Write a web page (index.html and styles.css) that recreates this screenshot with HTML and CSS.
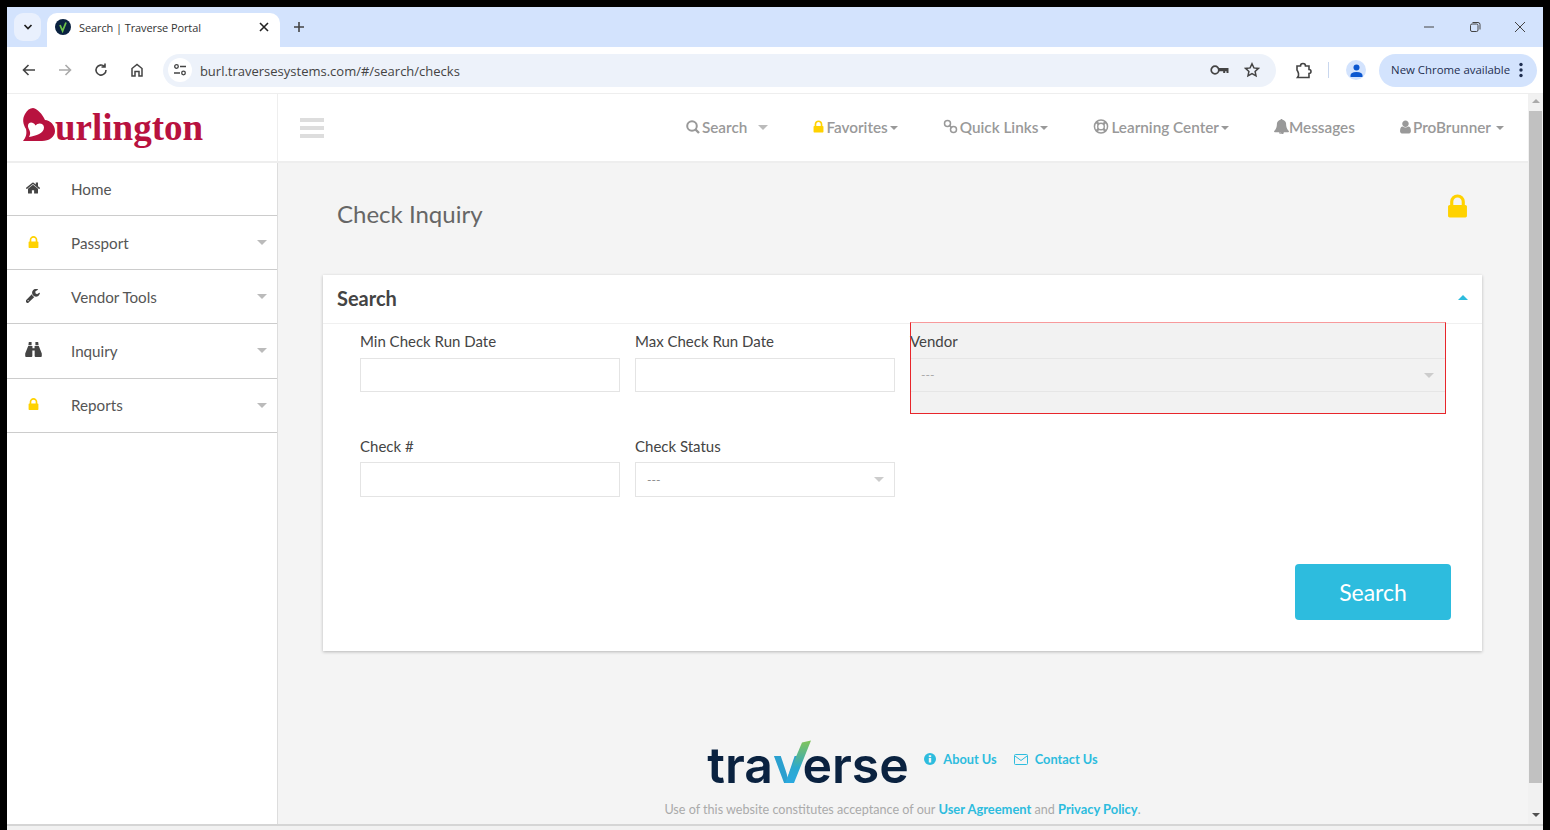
FILE: index.html
```html
<!DOCTYPE html>
<html lang="en">

<head>
    <meta charset="UTF-8">
    <meta name="viewport" content="width=device-width, initial-scale=1.0">
    <title>Search | Traverse Portal</title>
    <link rel="stylesheet" href="styles.css">
</head>

<body>
    <svg class="sprite" xmlns="http://www.w3.org/2000/svg">
        <symbol id="i-lock" viewBox="256 128 1280 1408"><path d="M640 768h512v-192q0-106-75-181t-181-75-181 75-75 181v192zm832 96v576q0 40-28 68t-68 28h-960q-40 0-68-28t-28-68v-576q0-40 28-68t68-28h32v-192q0-184 132-316t316-132 316 132 132 316v192h32q40 0 68 28t28 68z"/></symbol>
        <symbol id="i-home" viewBox="90 250 1612 1290"><path d="M1472 992v480q0 26-19 45t-45 19h-384v-384h-256v384h-384q-26 0-45-19t-19-45v-480q0-1 .5-3t.5-3l575-474 575 474q1 2 1 6zm223-69l-62 74q-8 9-21 11h-3q-13 0-21-7l-692-577-692 577q-12 8-24 7-13-2-21-11l-62-74q-8-10-7-23.500t11-21.500l719-599q32-26 76-26t76 26l244 204v-195q0-14 9-23t23-9h192q14 0 23 9t9 23v408l219 182q10 8 11 21.500t-7 23.500z"/></symbol>
        <symbol id="i-wrench" viewBox="150 150 1580 1600"><path d="M448 1472q0-26-19-45t-45-19-45 19-19 45 19 45 45 19 45-19 19-45zm644-420l-682 682q-37 37-90 37-52 0-91-37l-106-108q-38-36-38-90 0-53 38-91l681-681q39 98 114.500 173.500t173.500 114.500zm634-435q0 39-23 106-47 134-164.500 217.500t-258.500 83.500q-185 0-316.500-131.500t-131.500-316.500 131.500-316.500 316.500-131.500q58 0 121.500 16.500t107.500 46.500q16 11 16 28t-16 28l-293 169v224l193 107q5-3 79-48.500t135.500-81 70.500-35.500q15 0 23.500 10t8.500 25z"/></symbol>
        <symbol id="i-user" viewBox="250 120 1300 1550"><path d="M1536 1399q0 109-62.500 187t-150.500 78h-854q-88 0-150.500-78t-62.500-187q0-85 8.500-160.500t31.500-152 58.500-131 94-89 134.500-34.500q131 128 313 128t313-128q76 0 134.500 34.500t94 89 58.500 131 31.500 152 8.500 160.500zm-256-887q0 159-112.500 271.500t-271.500 112.500-271.500-112.500-112.500-271.500 112.500-271.500 271.500-112.500 271.500 112.500 112.500 271.500z"/></symbol>
        <symbol id="i-bell" viewBox="60 60 1670 1660"><path d="M912 1696q0-16-16-16-59 0-101.500-42.500t-42.500-101.500q0-16-16-16t-16 16q0 73 51.500 124.500t124.500 51.500q16 0 16-16zm816-288q0 52-38 90t-90 38h-448q0 106-75 181t-181 75-181-75-75-181h-448q-52 0-90-38t-38-90q50-42 91-88t85-119.500 74.500-158.500 50-206 19.500-260q0-152 117-282.500t307-158.500q-8-19-8-39 0-40 28-68t68-28 68 28 28 68q0 20-8 39 190 28 307 158.500t117 282.500q0 139 19.500 260t50 206 74.500 158.500 85 119.500 91 88z"/></symbol>
        <symbol id="i-binoculars" viewBox="0 0 16 14"><path d="M3.600 0h2.600v3H3.200zM9.800 0h2.600l.4 3H9.800zM3 3.800h4v2h2v-2h4l2.800 7v2.400q0 .8-.8.800H10q-.9 0-.9-.8V8H6.900v5.200q0 .8-.9.800H1q-.8 0-.8-.8v-2.400z"/></symbol>
    </svg>

    <div class="window">
        <div class="tabstrip">
            <div class="tab-search">
                <svg width="12" height="12" viewBox="0 0 12 12"><path d="M2.500 4 6 7.500 9.500 4" fill="none" stroke="#1f1f1f" stroke-width="1.700"/></svg>
            </div>
            <div class="tab">
                <svg class="favicon" width="16" height="16" viewBox="0 0 16 16"><circle cx="8" cy="8" r="8" fill="#0a2240"/><path d="M5 6l2.600 6L11 3.500" fill="none" stroke="#6cc24a" stroke-width="1.800"/></svg>
                <span class="tab-title">Search | Traverse Portal</span>
                <svg class="tab-close" width="10" height="10" viewBox="0 0 10 10"><path d="M1 1l8 8M9 1l-8 8" stroke="#222" stroke-width="1.600"/></svg>
            </div>
            <svg class="new-tab" width="12" height="12" viewBox="0 0 12 12"><path d="M6 1v10M1 6h10" stroke="#444" stroke-width="1.600"/></svg>
            <div class="win-controls">
                <svg width="12" height="12" viewBox="0 0 12 12"><path d="M1 6h10" stroke="#444"/></svg>
                <svg width="12" height="12" viewBox="0 0 12 12"><rect x="1.500" y="3" width="7.500" height="7.500" rx="1.500" fill="none" stroke="#444"/><path d="M3.500 1.500h5.500q2 0 2 2v5" fill="none" stroke="#444"/></svg>
                <svg width="12" height="12" viewBox="0 0 12 12"><path d="M1 1l10 10M11 1L1 11" stroke="#444"/></svg>
            </div>
        </div>

        <div class="toolbar">
            <div class="tool-btns">
                <svg width="16" height="16" viewBox="0 0 16 16"><path d="M14 8H3M7.500 3 2.500 8l5 5" fill="none" stroke="#444" stroke-width="1.600"/></svg>
                <svg width="16" height="16" viewBox="0 0 16 16"><path d="M2 8h11M8.500 3l5 5-5 5" fill="none" stroke="#aaa" stroke-width="1.600"/></svg>
                <svg width="16" height="16" viewBox="0 0 16 16"><path d="M13 8a5 5 0 1 1-1.500-3.500M12 1.500v3.500H8.500" fill="none" stroke="#444" stroke-width="1.600"/></svg>
                <svg width="16" height="16" viewBox="0 0 16 16"><path d="M3 14V6.500L8 2.500l5 4V14h-3V9.500H6V14z" fill="none" stroke="#444" stroke-width="1.500"/></svg>
            </div>
            <div class="omnibox">
                <span class="site-info">
                    <svg width="14" height="14" viewBox="0 0 14 14"><circle cx="3.500" cy="3.500" r="1.800" fill="none" stroke="#444" stroke-width="1.300"/><path d="M7 3.500h6M1 10h6" stroke="#444" stroke-width="1.300"/><circle cx="10.500" cy="10" r="1.800" fill="none" stroke="#444" stroke-width="1.300"/></svg>
                </span>
                <span class="url">burl.traversesystems.com/#/search/checks</span>
                <svg class="key" width="19" height="12" viewBox="0 0 19 12"><circle cx="5" cy="6" r="3.800" fill="none" stroke="#444" stroke-width="1.700"/><path d="M8.500 4H18.500v5h-2V7.300h-1.300V9h-2V7.300H8.500z" fill="#444"/></svg>
                <svg class="star" width="16" height="16" viewBox="0 0 16 16"><path d="M8 1.800l1.900 4.100 4.500.5-3.300 3 .9 4.500L8 11.600l-4 2.300.9-4.500-3.300-3 4.500-.5z" fill="none" stroke="#444" stroke-width="1.500"/></svg>
            </div>
            <svg class="ext" width="17" height="17" viewBox="0 0 17 17"><path d="M2 4h3.500Q5.500 1.500 8 1.500T10.500 4H14v3.500q2 0 2 2t-2 2V15.500H2.500q1.500-2 1-4T2 8z" fill="none" stroke="#444" stroke-width="1.600"/></svg>
            <span class="tool-divider"></span>
            <span class="profile">
                <svg width="13" height="13" viewBox="0 0 13 13" fill="#0b57d0"><circle cx="6.500" cy="3.500" r="3"/><path d="M0.500 13v-1.500q0-3.500 6-3.500t6 3.500V13z"/></svg>
            </span>
            <div class="update-pill">
                <span>New Chrome available</span>
                <svg width="4" height="16" viewBox="0 0 4 16" fill="#1f2f50"><circle cx="2" cy="2.500" r="1.700"/><circle cx="2" cy="8" r="1.700"/><circle cx="2" cy="13.500" r="1.700"/></svg>
            </div>
        </div>

        <div class="viewport">
            <div class="app">
                <header class="app-header">
                    <div class="brand">
                        <svg class="brand-mark" width="34" height="34" viewBox="0 0 34 34">
                            <path fill-rule="evenodd" d="M1 33C4 29 5 26 4 21 1 16 0 11 3 6 5 2 8 0 11 0c5 1 9 6 12 12 5 0 10 5 10 11 0 6-6 10-13 10zM7 29C10 24 6.500 22 6 18.500 5.500 14 11 13 13.500 17.500 16 14 22 15 22 19.500 22 25 14 28 7 29z" fill="#b8123f"/>
                        </svg>
                        <span class="brand-name">urlington</span>
                    </div>
                    <div class="hamburger"><span></span><span></span><span></span></div>
                    <nav class="top-nav">
                        <a class="nav-item nav-search">
                            <svg class="nav-icon" width="14" height="14" viewBox="0 0 14 14"><circle cx="6" cy="6" r="4.800" fill="none" stroke="#999" stroke-width="2"/><path d="M9.500 9.500 13 13" stroke="#999" stroke-width="2.400"/></svg>
                            Search<span class="nav-caret wide"></span>
                        </a>
                        <a class="nav-item">
                            <svg class="nav-icon lock" width="11" height="13"><use href="#i-lock"/></svg>
                            Favorites<span class="nav-caret"></span>
                        </a>
                        <a class="nav-item">
                            <svg class="nav-icon" width="15" height="15" viewBox="0 0 15 15" fill="none" stroke="#999" stroke-width="1.500"><circle cx="4.500" cy="4.500" r="3"/><circle cx="10.500" cy="10.500" r="3"/><path d="M6 6l3 3"/></svg>
                            Quick Links<span class="nav-caret"></span>
                        </a>
                        <a class="nav-item">
                            <svg class="nav-icon" width="16" height="15" viewBox="0 0 16 16" fill="none" stroke="#999"><circle cx="8" cy="8" r="7" stroke-width="1.600"/><circle cx="8" cy="8" r="3.500" stroke-width="1.500"/><path d="M3 3l2.500 2.500M13 3l-2.500 2.500M3 13l2.500-2.500M13 13l-2.500-2.500" stroke-width="2.500"/></svg>
                            Learning Center<span class="nav-caret"></span>
                        </a>
                        <a class="nav-item">
                            <svg class="nav-icon tight" width="15" height="15" fill="#999"><use href="#i-bell"/></svg>
                            Messages
                        </a>
                        <a class="nav-item">
                            <svg class="nav-icon" width="11" height="14" fill="#999"><use href="#i-user"/></svg>
                            ProBrunner<span class="nav-caret gap"></span>
                        </a>
                    </nav>
                </header>

                <div class="app-body">
                    <aside class="sidebar">
                        <a class="side-item first">
                            <svg class="side-icon" width="24" height="12"><use href="#i-home" x="5" width="14" height="12"/></svg>
                            <span>Home</span>
                        </a>
                        <a class="side-item has-sub">
                            <svg class="side-icon lock" width="24" height="12"><use href="#i-lock" x="7" width="11" height="12"/></svg>
                            <span>Passport</span>
                        </a>
                        <a class="side-item has-sub">
                            <svg class="side-icon" width="24" height="14"><use href="#i-wrench" x="5" width="14" height="14"/></svg>
                            <span>Vendor Tools</span>
                        </a>
                        <a class="side-item has-sub">
                            <svg class="side-icon" width="24" height="15"><use href="#i-binoculars" x="4" width="17" height="15"/></svg>
                            <span>Inquiry</span>
                        </a>
                        <a class="side-item has-sub">
                            <svg class="side-icon lock" width="24" height="12"><use href="#i-lock" x="7" width="11" height="12"/></svg>
                            <span>Reports</span>
                        </a>
                    </aside>

                    <main class="main">
                        <div class="page-title">
                            <h1>Check Inquiry</h1>
                            <svg class="title-lock lock" width="21" height="24"><use href="#i-lock"/></svg>
                        </div>

                        <section class="card">
                            <div class="card-header">
                                <h2>Search</h2>
                                <span class="collapse-caret"></span>
                            </div>
                            <form class="search-form">
                                <div class="field">
                                    <label>Min Check Run Date</label>
                                    <input type="text">
                                </div>
                                <div class="field">
                                    <label>Max Check Run Date</label>
                                    <input type="text">
                                </div>
                                <div class="field field-error">
                                    <label>Vendor</label>
                                    <div class="select-wrap">
                                        <select disabled><option>---</option></select>
                                    </div>
                                </div>
                                <div class="field">
                                    <label>Check #</label>
                                    <input type="text" class="tall">
                                </div>
                                <div class="field">
                                    <label>Check Status</label>
                                    <div class="select-wrap">
                                        <select class="tall"><option>---</option></select>
                                    </div>
                                </div>
                            </form>
                            <div class="form-actions">
                                <button type="button" class="btn-search">Search</button>
                            </div>
                        </section>

                        <footer class="footer">
                            <div class="footer-top">
                                <div class="traverse-logo">
                                    <span>tra</span><span class="logo-v">v<svg width="30" height="44" viewBox="0 0 30 44"><defs><linearGradient id="v-arm" x1="0" y1="0" x2="0" y2="1"><stop offset="0" stop-color="#82c45a"/><stop offset=".4" stop-color="#4fb39a"/><stop offset=".65" stop-color="#2ba9d0"/><stop offset="1" stop-color="#2ba9e0"/></linearGradient></defs><path d="M19 2.500 28 .5 11 43H2z" fill="url(#v-arm)"/></svg></span><span>erse</span>
                                </div>
                                <a class="foot-link">
                                    <svg width="12" height="12" viewBox="0 0 12 12"><circle cx="6" cy="6" r="6" fill="#2dbcde"/><rect x="4.800" y="5" width="2.400" height="4.500" fill="#f4f4f4"/><rect x="4.800" y="2.300" width="2.400" height="1.800" fill="#f4f4f4"/></svg>
                                    About Us
                                </a>
                                <a class="foot-link">
                                    <svg width="14" height="11" viewBox="0 0 14 11" fill="none" stroke="#2dbcde"><rect x=".5" y=".5" width="13" height="10" rx="1"/><path d="M1 2l6 4.500L13 2"/></svg>
                                    Contact Us
                                </a>
                            </div>
                            <p>Use of this website constitutes acceptance of our <a>User Agreement</a> and <a>Privacy Policy</a>.</p>
                        </footer>
                    </main>
                </div>
            </div>

            <div class="scrollbar">
                <span class="arrow-up"></span>
                <span class="thumb"></span>
                <span class="arrow-down"></span>
            </div>
        </div>
        <div class="status-line"></div>
    </div>
</body>

</html>
```

FILE: styles.css
```css
html,
body {
    margin: 0;
    height: 830px;
    overflow: hidden;
}

body {
    background: #000;
    padding: 7px 7px 0;
    box-sizing: border-box;
    font-family: Lato, Arial, sans-serif;
}

a {
    text-decoration: none;
}

.sprite {
    display: none;
}

.lock {
    fill: #ffd200;
}

.window {
    height: 823px;
    display: flex;
    flex-direction: column;
    background: #fff;
}

/* browser chrome */
.tabstrip {
    height: 40px;
    flex: none;
    background: #d3e3fd;
    display: flex;
    align-items: flex-start;
    padding-left: 7px;
}

.tab-search {
    width: 27px;
    height: 28px;
    margin-top: 6px;
    background: #e9f0fd;
    border-radius: 9px;
    display: flex;
    align-items: center;
    justify-content: center;
}

.tab {
    width: 233px;
    height: 34px;
    margin: 6px 0 0 6px;
    box-sizing: border-box;
    padding: 0 11px 6px 8px;
    background: #fff;
    border-radius: 10px 10px 0 0;
    display: flex;
    align-items: center;
    font-family: "Open Sans", sans-serif;
    font-size: 11px;
    letter-spacing: -0.1px;
    color: #333;
}

.tab-title {
    margin-left: 8px;
    flex: 1;
}

.new-tab {
    margin: 14px 0 0 13px;
}

.win-controls {
    margin-left: auto;
    width: 120px;
    box-sizing: border-box;
    padding: 14px 17px 0 0;
    display: flex;
    justify-content: space-between;
}

.toolbar {
    height: 47px;
    flex: none;
    box-sizing: border-box;
    border-bottom: 1px solid #eee;
    display: flex;
    align-items: center;
    padding: 0 6px 0 14px;
    background: #fff;
}

.tool-btns {
    width: 142px;
    display: flex;
    gap: 20px;
}

.omnibox {
    width: 1114px;
    height: 33px;
    box-sizing: border-box;
    background: #edf2fa;
    border-radius: 17px;
    display: flex;
    align-items: center;
    padding: 0 16px 0 5px;
    font-family: "Open Sans", sans-serif;
    font-size: 13px;
    color: #444;
}

.site-info {
    width: 24px;
    height: 24px;
    border-radius: 50%;
    background: #fff;
    display: flex;
    align-items: center;
    justify-content: center;
}

.url {
    margin-left: 8px;
    padding-top: 2px;
    flex: 1;
}

.star {
    margin-left: 15px;
}

.ext {
    margin-left: 19px;
}

.tool-divider {
    width: 1px;
    height: 16px;
    margin: 0 17px 0 16px;
    background: #c9d7ee;
}

.profile {
    width: 20px;
    height: 20px;
    border-radius: 50%;
    background: #d3e3fd;
    display: flex;
    align-items: center;
    justify-content: center;
}

.update-pill {
    margin-left: 13px;
    width: 158px;
    height: 33px;
    box-sizing: border-box;
    border-radius: 17px;
    background: #d3e3fd;
    display: flex;
    align-items: center;
    justify-content: space-between;
    padding: 0 14px 2px 12px;
    font-family: "Open Sans", sans-serif;
    font-size: 11.400px;
    color: #1f2f50;
}

.update-pill svg {
    margin-top: 2px;
}

/* page */
.viewport {
    flex: 1;
    display: flex;
    min-height: 0;
}

.app {
    flex: 1;
    display: flex;
    flex-direction: column;
    min-width: 0;
}

.app-header {
    height: 69px;
    flex: none;
    box-sizing: border-box;
    border-bottom: 2px solid #eee;
    display: flex;
    align-items: center;
    background: #fff;
}

.brand {
    width: 271px;
    height: 100%;
    box-sizing: border-box;
    border-right: 1px solid #eee;
    padding: 14px 0 0 15px;
    display: flex;
    align-items: flex-start;
    flex: none;
}

.brand-mark {
    flex: none;
}

.brand-name {
    font-family: "Liberation Serif", serif;
    font-weight: bold;
    font-size: 37px;
    line-height: 42px;
    color: #b8123f;
    margin: -1px 0 0 -1px;
}

.hamburger {
    width: 24px;
    margin-left: 22px;
    display: flex;
    flex-direction: column;
    gap: 4px;
}

.hamburger span {
    height: 4px;
    background: #ddd;
}

.top-nav {
    margin-left: auto;
    padding: 0 24px 2px 0;
    display: flex;
    gap: 45px;
}

.nav-item {
    display: flex;
    align-items: center;
    font-size: 15.300px;
    font-weight: 600;
    color: #999;
}

.nav-icon {
    margin-right: 2px;
}

.nav-icon.tight {
    margin-right: 0;
}

.nav-caret {
    width: 0;
    height: 0;
    margin-left: 2px;
    margin-top: 2px;
    border: 4px solid transparent;
    border-top-color: #999;
    border-bottom-width: 0;
}

.nav-caret.gap {
    margin-left: 5px;
}

.nav-caret.wide {
    margin-left: 11px;
    border-width: 5px 5px 0;
    border-top-color: #bbb;
}

.app-body {
    flex: 1;
    display: flex;
    min-height: 0;
}

.sidebar {
    width: 271px;
    flex: none;
    box-sizing: border-box;
    border-right: 1px solid #ddd;
    background: #fff;
}

.side-item {
    height: 54.200px;
    box-sizing: border-box;
    border-bottom: 1px solid #ccc;
    display: flex;
    align-items: center;
    position: relative;
    padding-left: 14px;
    font-size: 15.200px;
    color: #555;
}

.side-item.first {
    height: 53px;
}

.side-icon {
    flex: none;
    margin: -2px 26px 0 0;
    fill: #444;
}

.side-item .lock {
    fill: #ffd200;
}

.side-item.has-sub::after {
    content: "";
    position: absolute;
    right: 10px;
    top: 24px;
    border: 5.500px solid transparent;
    border-top-color: #bbb;
    border-bottom-width: 0;
}

.main {
    flex: 1;
    min-width: 0;
    background: #f4f4f4;
    padding: 0 46px 0 45px;
}

.page-title {
    height: 112px;
    box-sizing: border-box;
    padding: 36px 14px 0;
    display: flex;
    justify-content: space-between;
    align-items: flex-start;
}

.page-title h1 {
    margin: 0;
    font-size: 24px;
    font-weight: 400;
    line-height: 30px;
    color: #666;
}

.title-lock {
    margin-top: -5px;
}

.card {
    height: 376px;
    box-sizing: border-box;
    background: #fff;
    box-shadow: 0 1px 3px rgba(0, 0, 0, 0.25);
}

.card-header {
    height: 49px;
    box-sizing: border-box;
    border-bottom: 1px solid #f0f0f0;
    padding: 0 14px 2px;
    display: flex;
    align-items: center;
    justify-content: space-between;
}

.card-header h2 {
    margin: 0;
    font-size: 20px;
    font-weight: 700;
    color: #444;
}

.collapse-caret {
    border: 5px solid transparent;
    border-bottom-color: #2dbcde;
    border-top-width: 0;
    margin-top: -2px;
}

.search-form {
    margin-top: -2px;
    padding-left: 37px;
    display: grid;
    grid-template-columns: 260px 260px 536px;
    column-gap: 15px;
    row-gap: 13px;
}

.field {
    padding-top: 9px;
    min-height: 82px;
}

.field label {
    display: block;
    height: 20px;
    line-height: 20px;
    margin-bottom: 7px;
    font-size: 15px;
    color: #444;
}

.field input,
.field select {
    display: block;
    width: 100%;
    height: 34px;
    box-sizing: border-box;
    border: 1px solid #e4e4e4;
    background: #fff;
    padding: 0 11px 2px;
    font-family: Lato, Arial, sans-serif;
    font-size: 12px;
    color: #888;
    appearance: none;
    border-radius: 0;
}

.field .tall {
    height: 35px;
    margin-top: -1px;
    padding-bottom: 0;
}

.select-wrap {
    position: relative;
}

.select-wrap::after {
    content: "";
    position: absolute;
    right: 11px;
    top: 15px;
    border: 5px solid transparent;
    border-top-color: #ccc;
    border-bottom-width: 0;
}

.field-error {
    box-sizing: border-box;
    height: 92px;
    border: 1px solid #e8262b;
    border-top-color: #f89a9c;
    background: #f2f2f2;
    padding-top: 8px;
}

.field-error label {
    margin-left: -1px;
}

.field-error select {
    background: #f2f2f2;
    border-width: 1px 0;
    border-color: #e2e2e2;
    padding-left: 10px;
}

.form-actions {
    margin-top: 46px;
    padding-right: 31px;
    display: flex;
    justify-content: flex-end;
}

.btn-search {
    width: 156px;
    height: 56px;
    background: #2dbcde;
    color: #fff;
    border: none;
    border-radius: 4px;
    font-family: Lato, Arial, sans-serif;
    font-size: 23px;
}

.footer {
    margin-top: 80px;
    text-align: center;
}

.footer-top {
    display: flex;
    justify-content: center;
    align-items: center;
    gap: 17px;
    height: 56px;
}

.traverse-logo {
    font-family: Inter, sans-serif;
    font-weight: 600;
    font-size: 50px;
    line-height: 56px;
    color: #0a2240;
    display: flex;
    margin-top: 12px;
    width: 200px;
}

.logo-v {
    position: relative;
    color: #2ba0cf;
}

.logo-v svg {
    position: absolute;
    left: 10px;
    top: 3px;
}

.foot-link {
    display: flex;
    align-items: center;
    gap: 7px;
    font-size: 12.800px;
    font-weight: 700;
    color: #2dbcde;
}

.footer p {
    margin: 14px 0 0;
    font-size: 12.600px;
    color: #aaa;
}

.footer p a {
    font-size: 12.900px;
    font-weight: 700;
    color: #2dbcde;
}

.scrollbar {
    width: 15px;
    flex: none;
    background: #f1f1f1;
    display: flex;
    flex-direction: column;
    align-items: center;
}

.thumb {
    width: 13px;
    height: 672px;
    background: #c1c1c1;
    margin-top: 8px;
}

.arrow-up {
    margin-top: 5px;
    border: 4px solid transparent;
    border-bottom-color: #aaa;
    border-top-width: 0;
}

.arrow-down {
    margin-top: 30px;
    border: 4px solid transparent;
    border-top-color: #505050;
    border-bottom-width: 0;
}

.status-line {
    height: 6px;
    flex: none;
    box-sizing: border-box;
    border-top: 2px solid #d5d5d5;
    background: #f1f1f1;
}
```
